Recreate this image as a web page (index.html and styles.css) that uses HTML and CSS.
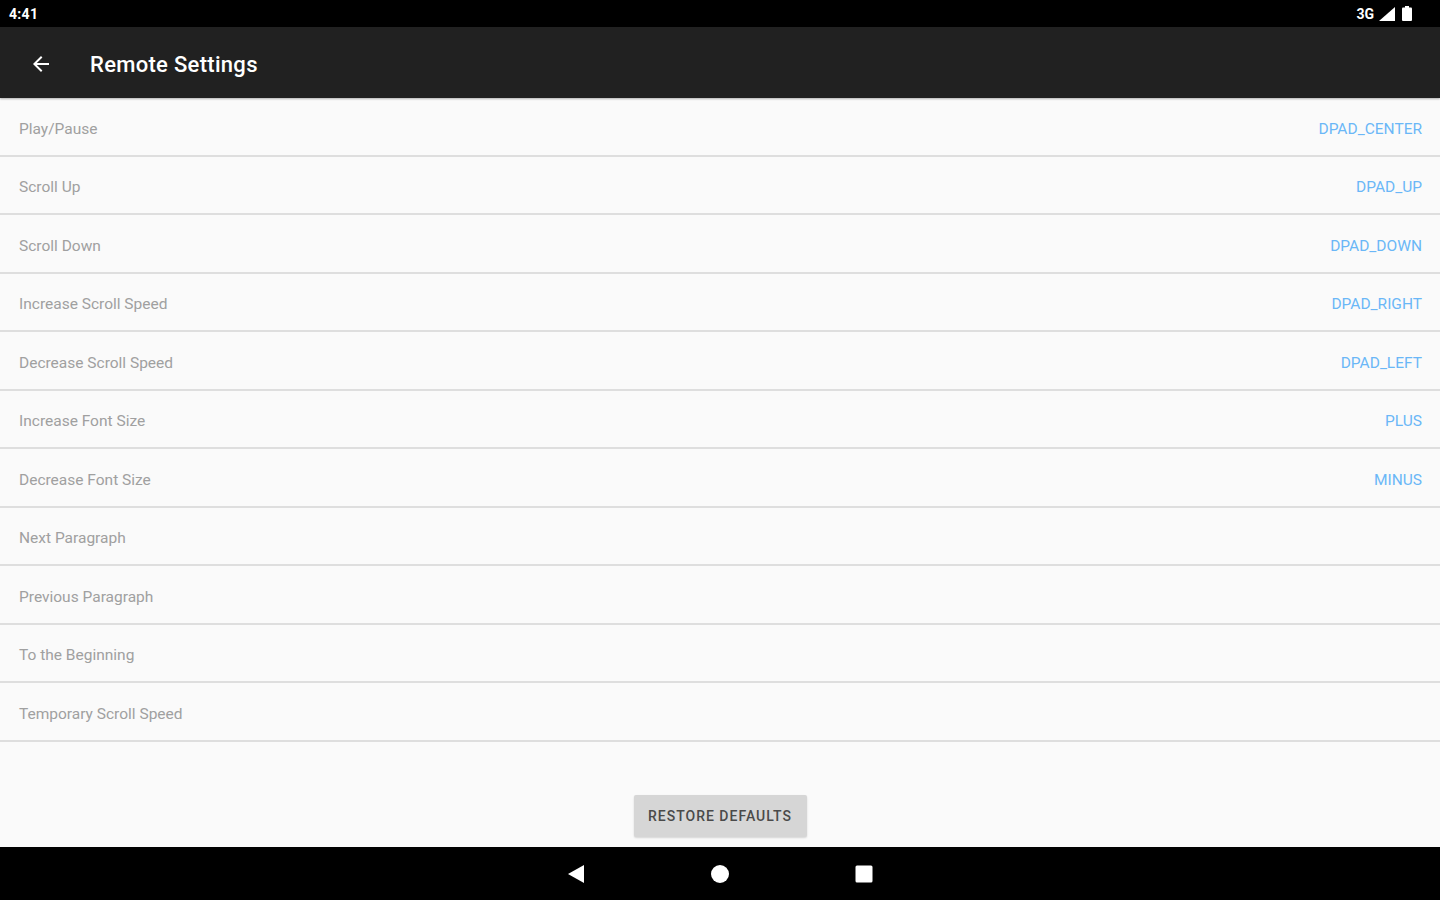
FILE: index.html
```html
<!DOCTYPE html>
<html lang="en">

<head>
    <meta charset="UTF-8">
    <meta name="viewport" content="width=device-width, initial-scale=1.0">
    <title>Remote Settings</title>
    <link rel="stylesheet" href="styles.css">
</head>

<body>
    <div class="status-bar">
        <span class="clock">4:41</span>
        <div class="status-icons">
            <span class="net">3G</span>
            <svg class="signal" width="16" height="14" viewBox="0 0 16 14">
                <path d="M16 0 L16 14 L0 14 Z" fill="#fff" />
            </svg>
            <svg class="battery" width="10" height="15" viewBox="0 0 10 15">
                <rect x="3" y="0" width="4" height="2" fill="#fff" />
                <rect x="0" y="1.5" width="10" height="13.5" rx="1" fill="#fff" />
            </svg>
        </div>
    </div>

    <div class="toolbar">
        <svg class="back" width="24" height="24" viewBox="0 0 24 24">
            <path d="M20 11H7.83l5.59-5.59L12 4l-8 8 8 8 1.41-1.41L7.83 13H20v-2z" fill="#fff" />
        </svg>
        <h1 class="title">Remote Settings</h1>
    </div>

    <div class="content">
        <ul class="settings">
            <li class="row"><span class="label">Play/Pause</span><span class="value">DPAD_CENTER</span></li>
            <li class="row"><span class="label">Scroll Up</span><span class="value">DPAD_UP</span></li>
            <li class="row"><span class="label">Scroll Down</span><span class="value">DPAD_DOWN</span></li>
            <li class="row"><span class="label">Increase Scroll Speed</span><span class="value">DPAD_RIGHT</span></li>
            <li class="row"><span class="label">Decrease Scroll Speed</span><span class="value">DPAD_LEFT</span></li>
            <li class="row"><span class="label">Increase Font Size</span><span class="value">PLUS</span></li>
            <li class="row"><span class="label">Decrease Font Size</span><span class="value">MINUS</span></li>
            <li class="row"><span class="label">Next Paragraph</span><span class="value"></span></li>
            <li class="row"><span class="label">Previous Paragraph</span><span class="value"></span></li>
            <li class="row"><span class="label">To the Beginning</span><span class="value"></span></li>
            <li class="row"><span class="label">Temporary Scroll Speed</span><span class="value"></span></li>
        </ul>

        <div class="footer">
            <button class="restore">RESTORE DEFAULTS</button>
        </div>
    </div>

    <div class="nav-bar">
        <svg width="20" height="20" viewBox="0 0 20 20">
            <path d="M18 1 L18 19 L2 10 Z" fill="#fff" />
        </svg>
        <svg width="20" height="20" viewBox="0 0 20 20">
            <circle cx="10" cy="10" r="9" fill="#fff" />
        </svg>
        <svg width="20" height="20" viewBox="0 0 20 20">
            <rect x="1.5" y="1.5" width="17" height="17" rx="1.5" fill="#fff" />
        </svg>
    </div>
</body>

</html>
```

FILE: styles.css
```css
* {
    box-sizing: border-box;
}

body {
    margin: 0;
    width: 1440px;
    height: 900px;
    display: flex;
    flex-direction: column;
    background-color: #fafafa;
    font-family: Roboto, 'Noto Sans', sans-serif;
    overflow: hidden;
}

.status-bar {
    height: 27px;
    background-color: #000;
    color: #fff;
    display: flex;
    align-items: center;
    justify-content: space-between;
    padding: 0 28px 0 9px;
}

.clock {
    font-size: 14px;
    font-weight: 700;
    letter-spacing: 0.3px;
}

.status-icons {
    display: flex;
    align-items: center;
    gap: 5px;
}

.net {
    font-size: 14px;
    font-weight: 700;
}

.battery {
    margin-left: 2px;
}

.toolbar {
    height: 71px;
    background-color: #212121;
    display: flex;
    align-items: center;
    padding: 3px 0 0 29px;
    box-shadow: 0 1px 2px rgba(0, 0, 0, 0.3);
    position: relative;
    z-index: 1;
}

.title {
    margin: 0 0 0 37px;
    color: #fff;
    font-size: 22px;
    font-weight: 500;
    letter-spacing: 0.3px;
}

.content {
    flex: 1;
    display: flex;
    flex-direction: column;
}

.settings {
    list-style: none;
    margin: 0;
    padding: 0;
}

.row {
    height: 58.5px;
    display: flex;
    align-items: center;
    justify-content: space-between;
    padding: 5px 18px 0 19px;
    border-bottom: 2px solid #dedede;
    font-size: 15.5px;
}

.label {
    color: #a0a0a0;
}

.value {
    color: #6ab7f7;
}

.footer {
    flex: 1;
    display: flex;
    align-items: flex-end;
    justify-content: center;
    padding-bottom: 10px;
}

.restore {
    width: 173px;
    height: 42px;
    border: none;
    border-radius: 2px;
    background-color: #d6d6d6;
    color: #4a4a4a;
    font-family: Roboto, 'Noto Sans', sans-serif;
    font-size: 14px;
    font-weight: 500;
    letter-spacing: 1px;
    box-shadow: 0 1px 2px rgba(0, 0, 0, 0.15);
}

.nav-bar {
    height: 53px;
    background-color: #000;
    display: flex;
    align-items: center;
    justify-content: center;
    gap: 124px;
}
```
